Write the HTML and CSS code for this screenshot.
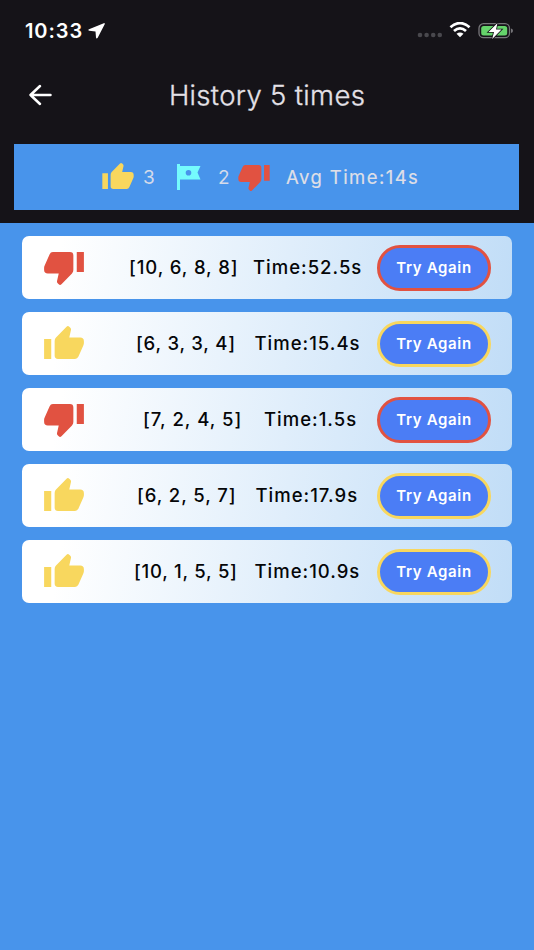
FILE: index.html
```html
<!DOCTYPE html>
<html lang="en">
<head>
<meta charset="utf-8">
<title>History</title>
<link rel="stylesheet" href="styles.css">
</head>
<body>
<svg class="defs" width="0" height="0">
  <symbol id="up" viewBox="0 0 117 97"><path d="M0 38H21V97H0ZM31 44Q31 38 35 34L66 2Q70-2 74 2L77 5Q80 8 79 12L74 34H106Q117 34 117 45V51Q117 54 115 58L101 90Q98 97 91 97H41Q31 97 31 87Z"/></symbol>
  <symbol id="down" viewBox="0 0 117 97"><path transform="rotate(180 58.5 48.5)" d="M0 38H21V97H0ZM31 44Q31 38 35 34L66 2Q70-2 74 2L77 5Q80 8 79 12L74 34H106Q117 34 117 45V51Q117 54 115 58L101 90Q98 97 91 97H41Q31 97 31 87Z"/></symbol>
</svg>
<header class="top">
  <div class="status">
    <span class="clock">10:33</span>
    <svg class="location" viewBox="0 0 17 16"><path d="M15.8.2 1 6.200Q-.3 7 1.200 7.800L7.500 8.500 8 14.500Q8.400 16.200 9.700 14.800L16.700 1.200Q17-.2 15.800.2Z"/></svg>
    <svg class="signal" viewBox="0 0 26 6"><circle cx="3" cy="3" r="2.300"/><circle cx="9.600" cy="3" r="2.300"/><circle cx="16.200" cy="3" r="2.300"/><circle cx="22.800" cy="3" r="2.300"/></svg>
    <svg class="wifi" viewBox="0 0 22 16"><path class="arc" d="M1.500 5.300Q11-3 20.500 5.300M5 9Q11 3.800 17 9"/><path d="M7.500 11.800Q11 9 14.500 11.800L11 15.200Z"/></svg>
    <svg class="battery" viewBox="0 0 36 18"><rect class="case" x="1" y="1.700" width="30.500" height="14" rx="4.500"/><rect class="charge" x="3.200" y="3.900" width="26" height="9.700" rx="2.500"/><path class="nub" d="M33 6.500Q35 7 35 8.700 35 10.500 33 11Z"/><path class="bolt" d="M19.500 1 10.500 10H16L14.200 17 23.500 7.500H18Z"/></svg>
  </div>
  <div class="titlebar">
    <svg class="back" viewBox="0 0 24 22"><path d="M22.500 11H2.500M12 2 2.500 11 12 20"/></svg>
    <h1>History 5 times</h1>
  </div>
  <section class="summary">
    <svg class="mini good"><use href="#up"/></svg><span class="count first">3</span>
    <svg class="flag" viewBox="0 0 24 27"><path fill-rule="evenodd" d="M0 0H3V2H23.500L20.500 8.500 23.500 15.500H3V26H0ZM11.500 6A2.800 2.800 0 1 0 11.500 11.600 2.800 2.800 0 1 0 11.500 6Z"/></svg>
    <span class="count second">2</span><svg class="mini bad"><use href="#down"/></svg>
    <span class="average">Avg Time:14s</span>
  </section>
</header>
<main>
  <article class="row r1"><svg class="thumb bad"><use href="#down"/></svg><span class="numbers">[10, 6, 8, 8]</span><span class="time">Time:52.5s</span><button class="fail">Try Again</button></article>
  <article class="row r2"><svg class="thumb good"><use href="#up"/></svg><span class="numbers">[6, 3, 3, 4]</span><span class="time">Time:15.4s</span><button>Try Again</button></article>
  <article class="row r3"><svg class="thumb bad"><use href="#down"/></svg><span class="numbers">[7, 2, 4, 5]</span><span class="time">Time:1.5s</span><button class="fail">Try Again</button></article>
  <article class="row r4"><svg class="thumb good"><use href="#up"/></svg><span class="numbers">[6, 2, 5, 7]</span><span class="time">Time:17.9s</span><button>Try Again</button></article>
  <article class="row r5"><svg class="thumb good"><use href="#up"/></svg><span class="numbers">[10, 1, 5, 5]</span><span class="time">Time:10.9s</span><button>Try Again</button></article>
</main>
</body>
</html>
```
FILE: styles.css
```css
* { box-sizing: border-box; }
body { margin: 0; min-height: 950px; background: #4894eb; font-family: Inter, sans-serif; color: #050608; overflow: hidden; }
svg { display: block; flex: none; }
.defs { position: absolute; }
.top { height: 223px; background: #151318; padding: 0 14.4px; }
.status { height: 60px; display: flex; align-items: center; color: #fff; fill: #fff; }
.clock { width: 58px; margin-left: 10.5px; font-size: 20px; font-weight: 600; letter-spacing: .95px; padding-top: 1px; }
.location { width: 17px; height: 16px; margin: 1px 0 0 5px; }
.signal { width: 26px; height: 6px; margin: 10px 0 0 312px; fill: #49484d; }
.wifi { width: 22px; height: 16px; margin-left: 6px; }
.arc { fill: none; stroke: #fff; stroke-width: 2.8; }
.battery { width: 36px; height: 18px; margin: 1px 0 0 7px; }
.case { fill: none; stroke: #77767a; stroke-width: 1.3; }
.charge { fill: #65d36b; }
.nub { fill: #77767a; }
.bolt { stroke: #151318; stroke-width: 1.6; paint-order: stroke; }
.titlebar { height: 84px; display: flex; align-items: center; padding-bottom: 14px; }
.back { width: 24px; height: 22px; margin: -1px 0 0 13.5px; fill: none; stroke: #fff; stroke-width: 2.5; stroke-linecap: round; stroke-linejoin: round; }
h1 { margin: -1px 0 0 117px; font-size: 27.5px; font-weight: 300; line-height: 36px; letter-spacing: .33px; color: #e4e1e7; -webkit-text-stroke: .3px #e4e1e7; white-space: nowrap; }
.summary { width: 505px; height: 66px; background: #4894eb; display: flex; align-items: center; padding-left: 87.6px; color: #d5dbea; font-size: 19px; white-space: nowrap; }
.mini { width: 32px; height: 26px; }
.mini.good { margin-bottom: 2px; }
.mini.bad { margin-top: 2px; }
.good { fill: #f8d75e; }
.bad { fill: #e15241; }
.count { width: 12px; margin-left: 9px; }
.flag { width: 24px; height: 27px; margin-left: 22px; fill: #75fbfd; }
.second { margin: 0 8.5px 0 17px; }
.average { margin-left: 15.5px; font-size: 18.5px; letter-spacing: 1.43px; -webkit-text-stroke: .2px #dfdfe7; color: #dfdfe7; }
main { display: flex; flex-direction: column; gap: 13px; padding: 13px 22px; }
.row { height: 63px; width: 490px; border-radius: 7px; display: grid; grid-template-columns: 85px 124px 124px 114px; padding-left: 22px; align-items: center; background: linear-gradient(100deg, #fff 8%, #c1ddf7 100%); }
.thumb { width: 40px; height: 33px; }
.thumb.good { margin-bottom: 2px; }
.thumb.bad { margin-top: 2px; }
.numbers, .time { font-size: 18.5px; font-weight: 500; white-space: nowrap; letter-spacing: 1px; padding-bottom: 2px; }
.numbers { letter-spacing: .9px; }
.r2 .numbers { margin-left: 7px; letter-spacing: .8px; }
.r3 .numbers { margin-left: 14px; letter-spacing: 1px; }
.r4 .numbers { margin-left: 8px; }
.r5 .numbers { margin-left: 5px; letter-spacing: .75px; }
.r2 .time, .r5 .time { margin-left: 1.5px; }
.r3 .time { margin-left: 11px; }
.r4 .time { margin-left: 2.5px; }
button { width: 114px; height: 46px; padding: 0 0 1px; border: 3px solid #f8d75e; border-radius: 23px; background: #4b7df5; color: #fff; font: 600 15px Inter, sans-serif; letter-spacing: .65px; }
.fail { border-color: #e15241; }
```
